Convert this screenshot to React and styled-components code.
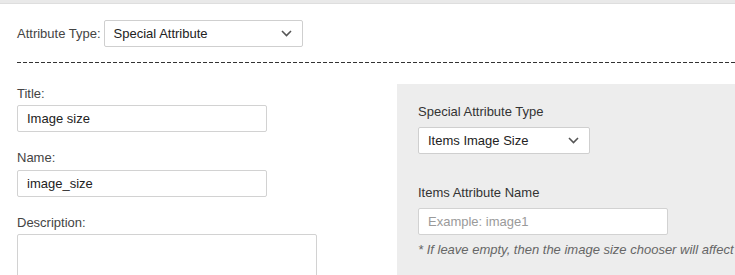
import React from "react";
import styled, { createGlobalStyle } from "styled-components";

const GlobalStyle = createGlobalStyle`
  html, body {
    margin: 0;
    padding: 0;
    background: #fff;
    overflow: hidden;
  }
  body {
    font-family: "Liberation Sans", Arial, sans-serif;
    font-size: 13px;
    color: #333;
  }
`;

const Page = styled.div`
  width: 100%;
  min-height: 275px;
`;

const TopStrip = styled.div`
  height: 3px;
  background: #e9e9e9;
  border-bottom: 1px solid #dedede;
`;

const HeaderRow = styled.div`
  display: flex;
  align-items: center;
  gap: 3px;
  padding: 16px 0 0 17px;
`;

const Label = styled.label`
  display: block;
  line-height: 15px;
  color: ${(p) => (p.$dark ? "#333" : "#444")};
  margin-bottom: ${(p) => p.$mb || 0}px;
`;

const SelectBox = styled.div`
  box-sizing: border-box;
  display: flex;
  align-items: center;
  justify-content: space-between;
  width: ${(p) => p.$w}px;
  height: 27px;
  padding: 0 9px 0 9px;
  background: #fff;
  border: 1px solid #cfcfcf;
  border-radius: 2px;
  color: #222;
  line-height: 15px;
`;

const Chevron = styled.svg`
  width: 11px;
  height: 7px;
  margin-right: 1px;
`;

const Divider = styled.div`
  margin: 15px 0 0 17px;
  height: 1px;
  background: repeating-linear-gradient(
    to right,
    #333 0,
    #333 4px,
    transparent 4px,
    transparent 6px
  );
`;

const Columns = styled.div`
  display: flex;
  margin-top: 21px;
`;

const LeftCol = styled.div`
  width: 397px;
  flex-shrink: 0;
  padding: 2px 0 0 17px;
  box-sizing: border-box;
`;

const Field = styled.div`
  margin-bottom: 18px;
`;

const TextInput = styled.div`
  box-sizing: border-box;
  width: ${(p) => p.$w}px;
  height: ${(p) => p.$h || 27}px;
  padding: 0 9px;
  display: flex;
  align-items: center;
  background: #fff;
  border: 1px solid #d2d2d2;
  border-radius: 2px;
  color: ${(p) => (p.$placeholder ? "#9a9a9a" : "#222")};
`;

const Panel = styled.div`
  flex: 1;
  min-width: 0;
  min-height: 200px;
  background: #ededed;
  padding: 20px 0 0 21px;
  box-sizing: border-box;
`;

const PanelGroup = styled.div`
  margin-bottom: ${(p) => p.$mb || 0}px;
`;

const Note = styled.div`
  margin-top: 7px;
  font-style: italic;
  color: #666;
  line-height: 15px;
  white-space: nowrap;
`;

function Select({ width, children }) {
  return (
    <SelectBox $w={width}>
      <span>{children}</span>
      <Chevron viewBox="0 0 11 7">
        <path d="M1 1 L5.5 5.5 L10 1" fill="none" stroke="#555" strokeWidth="1.6" />
      </Chevron>
    </SelectBox>
  );
}

export default function App() {
  return (
    <Page>
      <GlobalStyle />
      <TopStrip />
      <HeaderRow>
        <Label>Attribute Type:</Label>
        <Select width={199}>Special Attribute</Select>
      </HeaderRow>
      <Divider />
      <Columns>
        <LeftCol>
          <Field>
            <Label $mb={4}>Title:</Label>
            <TextInput $w={250}>Image size</TextInput>
          </Field>
          <Field>
            <Label $mb={5}>Name:</Label>
            <TextInput $w={250}>image_size</TextInput>
          </Field>
          <Field>
            <Label $mb={4}>Description:</Label>
            <TextInput $w={300} $h={60} />
          </Field>
        </LeftCol>
        <Panel>
          <PanelGroup $mb={31}>
            <Label $dark $mb={8}>Special Attribute Type</Label>
            <Select width={172}>Items Image Size</Select>
          </PanelGroup>
          <PanelGroup>
            <Label $dark $mb={8}>Items Attribute Name</Label>
            <TextInput $w={250} $placeholder>Example: image1</TextInput>
            <Note>* If leave empty, then the image size chooser will affect</Note>
          </PanelGroup>
        </Panel>
      </Columns>
    </Page>
  );
}
